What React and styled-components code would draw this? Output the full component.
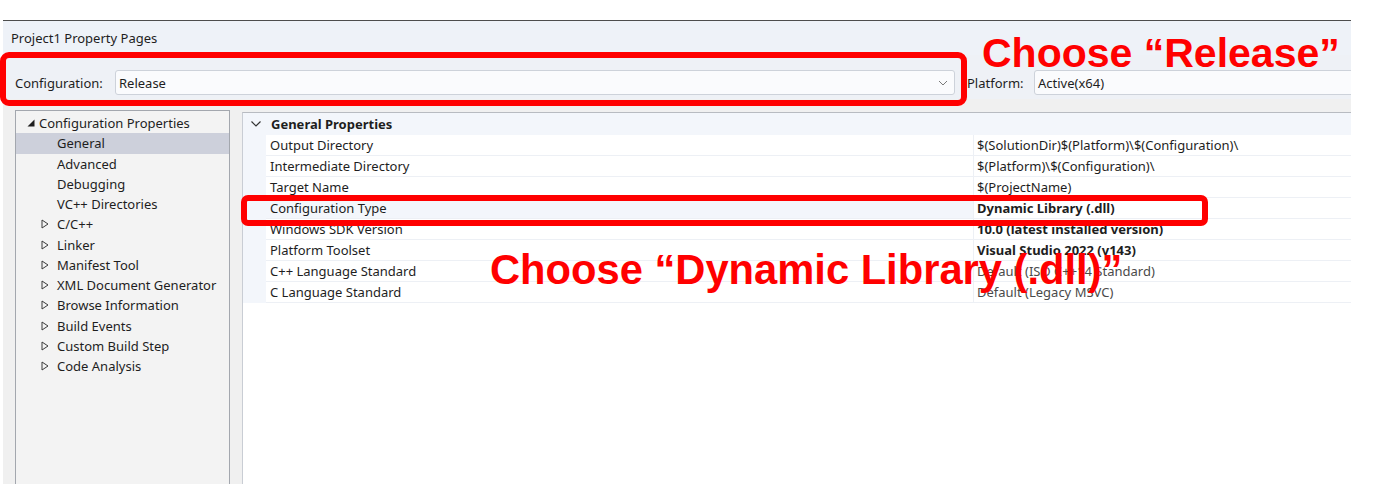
import styled, { createGlobalStyle } from 'styled-components';

const GlobalStyle = createGlobalStyle`
  html, body { margin:0; padding:0; background:#fff; }
  body { font-family: "Noto Sans", "Open Sans", "DejaVu Sans", sans-serif; }
`;

const treeItems = [
    { label: 'Configuration Properties', level: 0, expander: 'open' },
    { label: 'General', level: 1, selected: true },
    { label: 'Advanced', level: 1 },
    { label: 'Debugging', level: 1 },
    { label: 'VC++ Directories', level: 1 },
    { label: 'C/C++', level: 1, expander: 'closed' },
    { label: 'Linker', level: 1, expander: 'closed' },
    { label: 'Manifest Tool', level: 1, expander: 'closed' },
    { label: 'XML Document Generator', level: 1, expander: 'closed' },
    { label: 'Browse Information', level: 1, expander: 'closed' },
    { label: 'Build Events', level: 1, expander: 'closed' },
    { label: 'Custom Build Step', level: 1, expander: 'closed' },
    { label: 'Code Analysis', level: 1, expander: 'closed' },
];

const properties = [
    { name: 'Output Directory', value: '$(SolutionDir)$(Platform)\\$(Configuration)\\' },
    { name: 'Intermediate Directory', value: '$(Platform)\\$(Configuration)\\' },
    { name: 'Target Name', value: '$(ProjectName)' },
    { name: 'Configuration Type', value: 'Dynamic Library (.dll)', bold: true, selected: true },
    { name: 'Windows SDK Version', value: '10.0 (latest installed version)', bold: true },
    { name: 'Platform Toolset', value: 'Visual Studio 2022 (v143)', bold: true },
    { name: 'C++ Language Standard', value: 'Default (ISO C++14 Standard)', muted: true },
    { name: 'C Language Standard', value: 'Default (Legacy MSVC)', muted: true },
];

const Expander = ({ type }) => {
    if (type === 'open') {
        return (
            <svg width="8" height="8" viewBox="0 0 8 8">
                <polygon points="7.5,0.5 7.5,7.5 0.5,7.5" fill="#1e1e1e" />
            </svg>
        );
    }
    if (type === 'closed') {
        return (
            <svg width="8" height="10" viewBox="0 0 8 10">
                <polygon points="1,1 7,5 1,9" fill="none" stroke="#3a3a3a" strokeWidth="1" />
            </svg>
        );
    }
    return null;
};

const ComboChevron = () => (
    <svg width="10" height="6" viewBox="0 0 10 6">
        <polyline points="1,1 5,5 9,1" fill="none" stroke="#7a7a7a" strokeWidth="1" />
    </svg>
);

const App = () => {
    return (
        <Page>
            <GlobalStyle />
            <Window>
                <TitleBar>Project1 Property Pages</TitleBar>
                <ConfigRow>
                    <FieldLabel width={100}>Configuration:</FieldLabel>
                    <Combo width={840}>
                        <span>Release</span>
                        <ComboChevron />
                    </Combo>
                    <FieldLabel width={67} gap={12}>Platform:</FieldLabel>
                    <Combo grow>
                        <span>Active(x64)</span>
                    </Combo>
                </ConfigRow>
                <Body>
                    <Tree>
                        {treeItems.map((item) => (
                            <TreeItem key={item.label} level={item.level} selected={item.selected}>
                                <ExpanderSlot level={item.level}>
                                    <Expander type={item.expander} />
                                </ExpanderSlot>
                                {item.label}
                            </TreeItem>
                        ))}
                    </Tree>
                    <Grid>
                        <GroupHeader>
                            <svg width="10" height="6" viewBox="0 0 10 6">
                                <polyline points="0.5,0.5 5,5 9.5,0.5" fill="none" stroke="#333" strokeWidth="1.2" />
                            </svg>
                            <span>General Properties</span>
                        </GroupHeader>
                        {properties.map((p) => (
                            <PropRow key={p.name}>
                                <Gutter />
                                <NameCell selected={p.selected}>{p.name}</NameCell>
                                <ValueCell bold={p.bold} muted={p.muted}>{p.value}</ValueCell>
                            </PropRow>
                        ))}
                    </Grid>
                </Body>
            </Window>

            <Callout left={0} top={52} width={967} height={54} />
            <Callout left={241} top={195} width={967} height={31} radius={7} />
            <Note left={982} top={33} size={41}>Choose “Release”</Note>
            <Note left={490} top={249} size={41.7}>Choose “Dynamic Library (.dll)”</Note>
        </Page>
    );
};

const Page = styled.div`
position:relative;
width:1384px; height:484px;
overflow:hidden;
background:#fff;
`;
const Window = styled.div`
margin:20px 0 0 3px;
width:1348px; height:464px;
border-top:1px solid #4d4d4d;
background:#f0f0f0;
display:flex; flex-direction:column;
overflow:hidden;
font-size:13px;
color:#1e1e1e;
`;
const TitleBar = styled.div`
height:34px;
display:flex; align-items:center;
padding-left:8px;
background:#eef2f8;
`;
const ConfigRow = styled.div`
height:44px;
box-sizing:border-box;
display:flex; align-items:flex-start;
padding:15px 0 0 12px;
background:#eef1f6;
`;
const FieldLabel = styled.div`
width:${(p) => p.width}px;
height:25px;
margin-left:${(p) => p.gap || 0}px;
display:flex; align-items:center;
flex-shrink:0;
`;
const Combo = styled.div`
box-sizing:border-box;
height:25px;
${(p) => (p.grow ? 'flex:1; margin-right:-4px;' : `width:${p.width}px;`)}
display:flex; align-items:center; justify-content:space-between;
padding:0 6px 0 3px;
border:1px solid #cdd2da;
border-radius:3px;
background:#fafbfd;
`;
const Body = styled.div`
flex:1;
display:flex; align-items:flex-start;
gap:12px;
padding-left:12px;
min-height:0;
`;
const Tree = styled.div`
box-sizing:border-box;
width:215px; height:400px;
margin-top:11px;
padding-top:2px;
border:1px solid #a3a7ae;
background:#f3f3f3;
`;
const TreeItem = styled.div`
height:20.25px;
display:flex; align-items:center;
padding-left:${(p) => (p.level === 0 ? 11 : 25)}px;
background:${(p) => (p.selected ? '#cdd0db' : 'transparent')};
white-space:nowrap;
`;
const ExpanderSlot = styled.span`
width:${(p) => (p.level === 0 ? 12 : 16)}px;
display:flex; align-items:center;
flex-shrink:0;
`;
const Grid = styled.div`
flex:1;
align-self:stretch;
margin-top:13px;
border-top:1px solid #b8bbc1;
border-left:1px solid #c9cdd4;
background:#fff;
`;
const GroupHeader = styled.div`
height:22px;
display:flex; align-items:center;
gap:10px;
padding-left:8px;
background:#f3f6fb;
font-weight:700;
`;
const PropRow = styled.div`
height:21px;
display:grid;
grid-template-columns:23px 707px 1fr;
`;
const Gutter = styled.div`
background:#f3f6fb;
`;
const NameCell = styled.div`
display:flex; align-items:center;
padding-left:4px;
border-bottom:1px solid #edf0f5;
background:${(p) => (p.selected ? '#f3f6fb' : '#fff')};
white-space:nowrap;
`;
const ValueCell = styled.div`
display:flex; align-items:center;
padding-left:3px;
border-left:1px solid #edf0f5;
border-bottom:1px solid #edf0f5;
font-weight:${(p) => (p.bold ? 700 : 400)};
color:${(p) => (p.muted ? '#4a4a4a' : '#1e1e1e')};
white-space:nowrap;
`;
const Callout = styled.div`
position:absolute;
left:${(p) => p.left}px; top:${(p) => p.top}px;
width:${(p) => p.width}px; height:${(p) => p.height}px;
box-sizing:border-box;
border:6px solid #ff0000;
border-radius:${(p) => p.radius || 9}px;
`;
const Note = styled.div`
position:absolute;
left:${(p) => p.left}px; top:${(p) => p.top}px;
font-family:"Liberation Sans", Arial, sans-serif;
font-weight:700;
font-size:${(p) => p.size}px;
line-height:1;
color:#ff0000;
white-space:nowrap;
`;

export default App;
